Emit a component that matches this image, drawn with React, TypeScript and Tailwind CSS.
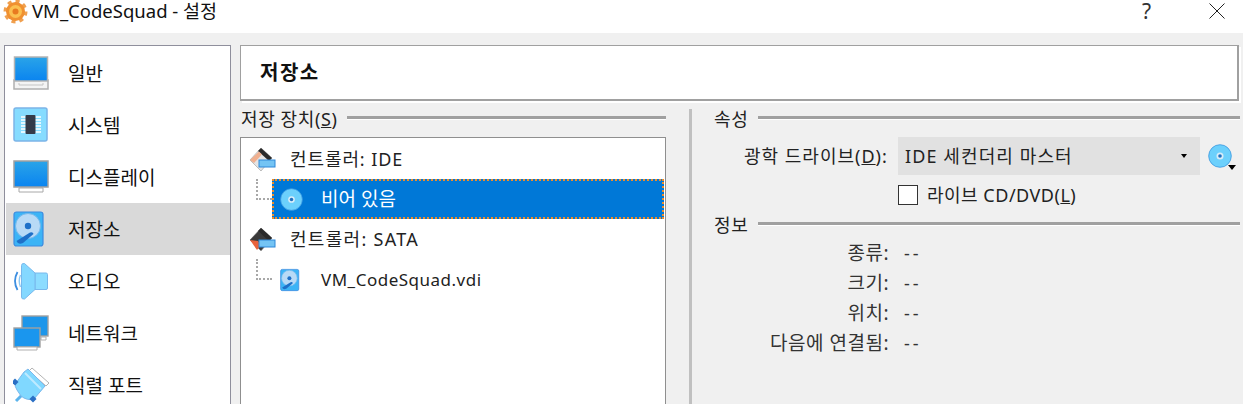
import React from "react";

const font = { fontFamily: '"Noto Sans", "Noto Sans CJK KR", sans-serif' };

const ScreenIcon = ({ wide = false }: { wide?: boolean }) => (
  <svg width="36" height="34" viewBox="0 0 36 34">
    <defs>
      <linearGradient id="scr" x1="0" y1="0" x2="0" y2="1">
        <stop offset="0" stopColor="#2aa4e8" />
        <stop offset="1" stopColor="#0a84f0" />
      </linearGradient>
    </defs>
    {wide ? (
      <>
        <path d="M6 28h24v4H6z" fill="#fff" stroke="#a8a8a8" />
        <rect x="1" y="1" width="34" height="26" fill="url(#scr)" stroke="#a0a0a0" strokeWidth="1.5" />
      </>
    ) : (
      <>
        <path d="M1 24h34v9H1z" fill="#f4f4f4" stroke="#b0b0b0" strokeWidth="1.5" />
        <rect x="1.5" y="1" width="33" height="24" fill="url(#scr)" stroke="#b4b4b4" strokeWidth="1.5" />
        <path d="M6 27v2h24v-2" fill="none" stroke="#c4c4c4" />
      </>
    )}
  </svg>
);

const ChipIcon = () => (
  <svg width="36" height="36" viewBox="0 0 36 36">
    <rect x="1" y="1" width="33" height="33" rx="2" fill="#86dcff" stroke="#7cb4e8" strokeWidth="1.5" />
    <path d="M8 10h20M8 13h20M8 16h20M8 19h20M8 22h20M8 25h20" stroke="#fff" strokeWidth="1.5" />
    <rect x="12.5" y="8" width="10" height="19" rx="1" fill="#333a48" />
  </svg>
);

const DiskIcon = ({ size = 32 }: { size?: number }) => (
  <svg width={size} height={size + 4} viewBox="0 0 32 36">
    <rect x="1" y="1" width="29" height="34" rx="2.5" fill="#3cb4f6" stroke="#3c8ce0" strokeWidth="1.2" />
    <circle cx="15" cy="15" r="12.5" fill="#b8daf6" stroke="#74b8ec" />
    <circle cx="15" cy="15" r="3.2" fill="#1e70c8" />
    <path d="M3.5 30 L17 21.5 q3 -1 3.5 1.5 L10 32 q-5 2 -6.5 -2z" fill="#1e70c8" />
  </svg>
);

const SpeakerIcon = () => (
  <svg width="36" height="37" viewBox="-1 0 36 37">
    <path d="M3.500 9 q-5 9 0 18" fill="none" stroke="#3c8ee0" strokeWidth="1.800" />
    <path d="M6.500 12 q-2.500 6 0 12" fill="none" stroke="#8cc8f4" strokeWidth="1.400" />
    <path d="M21 10 h11 q1.500 0 1.500 1.500 V25 q0 1.500 -1.500 1.500 H21z" fill="#8cdcff" stroke="#78b8ec" />
    <path d="M7.500 2.500 q0 -2.500 3 -2 L21 10 V26.500 L10.500 36 q-3 .5 -3 -2z" fill="#84d8ff" stroke="#78b8ec" />
  </svg>
);

const NetworkIcon = () => (
  <svg width="36" height="36" viewBox="0 0 36 36">
    <rect x="9" y="1" width="26" height="20" fill="#1d96ea" stroke="#a0a0a0" strokeWidth="1.4" />
    <path d="M28 22h5v3h-5z" fill="#fff" stroke="#b0b0b0" />
    <rect x="1" y="13" width="26" height="19" fill="#1a96ee" stroke="#a0a0a0" strokeWidth="1.4" />
    <path d="M4 32h20v3H4z" fill="#fff" stroke="#b0b0b0" />
  </svg>
);

const SerialIcon = () => (
  <svg width="36" height="36" viewBox="0 0 36 36">
    <path d="M19 1 L36 16 L33 19 L16 4z" fill="#fff" stroke="#b4b4b4" />
    <path d="M3 34 L9 28" stroke="#5cb4ec" strokeWidth="3" />
    <path d="M11 5 L15 2 L32 19 L21 32 q-7 2 -13 -3 L4 23 q-3 -4 -1 -7z" fill="#80d8ff" stroke="#7cb8ec" />
    <path d="M12 6 L28 22" stroke="#bfeaff" strokeWidth="2" />
    <rect x="-.5" y="12.500" width="5" height="5" transform="rotate(45 2 15)" fill="#2a6fc4" />
    <rect x="17.500" y="29.500" width="5" height="5" transform="rotate(45 20 32)" fill="#2a6fc4" />
  </svg>
);

const GearIcon = () => (
  <svg width="25" height="25" viewBox="0 0 25 25" className="mt-[2px]">
    <circle cx="12.500" cy="12.500" r="10" fill="none" stroke="#f0a050" strokeWidth="4" pathLength="80" strokeDasharray="5 5" />
    <circle cx="12.500" cy="12.500" r="9.500" fill="#f09030" />
    <circle cx="12.500" cy="12.500" r="6.500" fill="#fbc050" />
    <circle cx="12.500" cy="12.500" r="3" fill="#e87a20" />
  </svg>
);

const ControllerIcon = ({ dark = false }: { dark?: boolean }) => (
  <svg width="27" height="25" viewBox="0 0 27 25">
    <path d="M12 1 L23 11 L12 24 L1 13z" fill={dark ? "#3a3a3a" : "#e4e4e4"} stroke="#999" strokeWidth=".6" />
    <path d="M12 1 L23 11 L20 14 L9 4z" fill="#2a2a2a" />
    <path d="M1 13 L10 4.500 L13 7.500 L5 16z" fill={dark ? "#3a3a3a" : "#f0b090"} />
    {dark ? <path d="M1 13 L9 14 L12 18 L8 23z" fill="#e8623c" /> : null}
    <rect x="10" y="13" width="16" height="7" fill="#74c4f4" stroke="#2e88d8" />
  </svg>
);

const CdIcon = ({ size = 24 }: { size?: number }) => (
  <svg width={size} height={size} viewBox="0 0 24 24">
    <circle cx="12" cy="12" r="11.300" fill="#6cd0fc" stroke="#3c98e0" strokeWidth=".8" />
    <circle cx="12" cy="12" r="3.500" fill="#d8ecf8" />
    <circle cx="12" cy="12" r="1.800" fill="#2070c0" />
  </svg>
);

const SideItem = ({ icon, label, active = false }: { icon: React.ReactNode; label: string; active?: boolean }) => (
  <div className={`flex items-center h-[52px] shrink-0 ${active ? "bg-[#d9d9d9]" : ""}`}>
    <div className="w-[62px] pl-[7px] flex items-center justify-start shrink-0">{icon}</div>
    <span className="mt-[2px] text-[19px] text-[#111] whitespace-nowrap">{label}</span>
  </div>
);

const GroupTitle = ({ children }: { children: React.ReactNode }) => (
  <div className="flex items-center gap-[10px] h-[20px]">
    <span className="text-[18px] tracking-[.6px] leading-none text-[#222] whitespace-nowrap">{children}</span>
    <div className="flex-1 h-[4px] mb-[3px] bg-[#a0a0a0] border-b border-white" />
  </div>
);

const TreeStub = () => (
  <div className="w-[16px] h-[21px] ml-[15px] border-l-2 border-b-2 border-dotted border-[#a8a8a8] shrink-0" />
);

const InfoRow = ({ label }: { label: string }) => (
  <div className="flex items-center h-[30px]">
    <span className="w-[176px] pr-[1px] text-right text-[19px] tracking-[.5px] text-[#333] whitespace-nowrap">{label}:</span>
    <span className="ml-[14px] text-[18px] tracking-[3px] text-[#333]">--</span>
  </div>
);

export default function App() {
  return (
    <div style={font} className="w-[1243px] h-[404px] overflow-hidden bg-[#f0f0f0] flex flex-col">
      <div className="h-[33px] bg-white flex items-center shrink-0 pl-[3px] pb-[12px]">
        <GearIcon />
        <span className="ml-[4px] text-[18.5px] leading-[18px] text-[#111]">VM_CodeSquad - 설정</span>
        <span className="ml-auto mr-[58px] text-[21px] leading-[18px] text-[#333]">?</span>
        <svg width="16" height="16" viewBox="0 0 16 16" className="mr-[18px]">
          <path d="M.5.5l15 15M15.500.5l-15 15" stroke="#222" strokeWidth="1" />
        </svg>
      </div>

      <div className="flex flex-1 min-h-0 pt-[12px] pl-[4px]">
        <div className="w-[227px] shrink-0 border border-[#8f8f9c] border-b-0 bg-white pt-[1px] pl-[1px] flex flex-col overflow-hidden">
          <SideItem icon={<ScreenIcon />} label="일반" />
          <SideItem icon={<ChipIcon />} label="시스템" />
          <SideItem icon={<ScreenIcon wide />} label="디스플레이" />
          <SideItem icon={<DiskIcon />} label="저장소" active />
          <SideItem icon={<SpeakerIcon />} label="오디오" />
          <SideItem icon={<NetworkIcon />} label="네트워크" />
          <SideItem icon={<SerialIcon />} label="직렬 포트" />
        </div>

        <div className="ml-[9px] w-[1000px] flex flex-col">
          <div className="w-[999px] h-[56px] bg-white border border-[#a0a0a0] border-r-2 border-b-2 shadow-[2px_2px_0_#fff] flex items-center pl-[19px] shrink-0">
            <span className="text-[20px] tracking-[1.5px] font-bold text-[#111]">저장소</span>
          </div>

          <div className="flex flex-1 min-h-0 pt-[8px]">
            <div className="w-[426px] shrink-0 flex flex-col">
              <div className="pl-[1px]">
                <GroupTitle>저장 장치(<span className="underline">S</span>)</GroupTitle>
              </div>
              <div className="mt-[8px] flex-1 bg-white border border-[#8f8f8f] border-b-0 pt-[2px]">
                <div className="flex items-center h-[39px] pl-[8px]">
                  <ControllerIcon />
                  <span className="ml-[14px] text-[18px] tracking-[.9px] text-[#222]">컨트롤러: IDE</span>
                </div>
                <div className="flex items-start h-[40px]">
                  <TreeStub />
                  <div className="w-[392px] h-[40px] bg-[#0078d7] border-2 border-dotted border-[#f08c28] flex items-center pl-[6px]">
                    <CdIcon size={23} />
                    <span className="ml-[18px] text-[19px] text-white">비어 있음</span>
                  </div>
                </div>
                <div className="flex items-center h-[40px] pl-[8px]">
                  <ControllerIcon dark />
                  <span className="ml-[14px] text-[18px] tracking-[1.3px] text-[#222]">컨트롤러: SATA</span>
                </div>
                <div className="flex items-start h-[40px]">
                  <TreeStub />
                  <div className="pl-[8px] mt-[8px] flex items-center">
                    <DiskIcon size={20} />
                    <span className="ml-[21px] text-[17px] tracking-[.5px] text-[#222]">VM_CodeSquad.vdi</span>
                  </div>
                </div>
              </div>
            </div>

            <div className="ml-[23px] w-[3px] bg-[#c0c0c0] shrink-0" />

            <div className="ml-[22px] w-[526px] flex flex-col">
              <GroupTitle>속성</GroupTitle>
              <div className="flex items-center mt-[8px] h-[38px]">
                <span className="w-[176px] pl-[30px] text-[18px] tracking-[1px] text-[#222] whitespace-nowrap">
                  광학 드라이브(<span className="underline">D</span>):
                </span>
                <div className="w-[302px] ml-[8px] h-[38px] bg-[#e1e1e1] flex items-center justify-between pl-[7px] pr-[13px]">
                  <span className="text-[18px] tracking-[1.1px] text-[#222] whitespace-nowrap">IDE 세컨더리 마스터</span>
                  <span className="w-0 h-0 border-x-[3px] border-x-transparent border-t-[4px] border-t-black" />
                </div>
                <div className="relative ml-[8px]">
                  <CdIcon />
                  <span className="absolute right-[-4px] bottom-[-2px] w-0 h-0 border-x-[4px] border-x-transparent border-t-[5px] border-t-black" />
                </div>
              </div>
              <div className="flex items-center h-[40px] pl-[184px]">
                <div className="w-[20px] h-[20px] bg-white border border-[#333]" />
                <span className="ml-[9px] text-[18px] tracking-[.5px] text-[#222] whitespace-nowrap">
                  라이브 CD/DVD(<span className="underline">L</span>)
                </span>
              </div>
              <GroupTitle>정보</GroupTitle>
              <div className="mt-[3px]">
                <InfoRow label="종류" />
                <InfoRow label="크기" />
                <InfoRow label="위치" />
                <InfoRow label="다음에 연결됨" />
              </div>
            </div>
          </div>
        </div>
      </div>
    </div>
  );
}
